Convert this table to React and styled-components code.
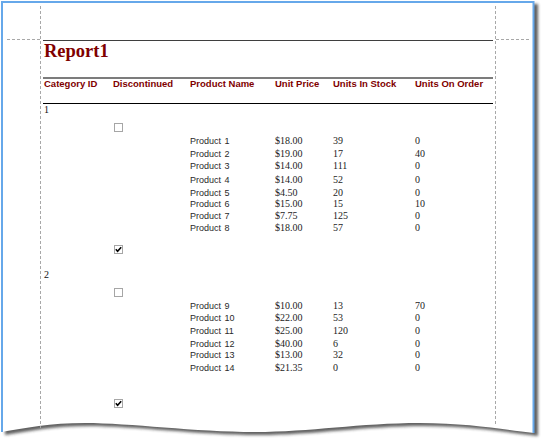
import React from "react";
import styled, { createGlobalStyle } from "styled-components";

const Global = createGlobalStyle`
  html, body { margin: 0; padding: 0; background: #ffffff; }
  #root { width: 542px; height: 444px; }
`;

const Canvas = styled.div`
  position: relative;
  width: 542px;
  height: 444px;
  overflow: hidden;
  background: #ffffff;
`;

const FrameArt = styled.svg`
  position: absolute;
  left: 0;
  top: 0;
  width: 542px;
  height: 444px;
  z-index: 0;
`;

const Report = styled.div`
  position: relative;
  z-index: 1;
  width: 450px;
  margin: 40px 0 0 43px;
  display: flex;
  flex-direction: column;
`;

const TitleBand = styled.div`
  height: 36px;
  border-top: 1px solid #3f3f3f;
  padding-left: 1px;
`;

const Title = styled.h1`
  margin: 0;
  padding-top: 0.5px;
  font-family: "Liberation Serif", "Times New Roman", serif;
  font-weight: bold;
  font-size: 18.5px;
  line-height: 18.5px;
  color: #800000;
`;

const Grid = styled.div`
  display: grid;
  grid-template-columns: 69px 77px 85px 58px 82px 1fr;
  padding-left: 1px;
  align-items: start;
`;

const HeaderBand = styled(Grid)`
  height: 24px;
  border-top: 2px solid #7c7c7c;
  border-bottom: 1px solid #000000;
`;

const HeadCell = styled.div`
  font-family: "Liberation Sans", Arial, sans-serif;
  font-weight: bold;
  font-size: 9.5px;
  line-height: 9px;
  color: #800000;
  white-space: nowrap;
`;

const Group = styled.div`
  display: flex;
  flex-direction: column;
`;

const GroupLabel = styled.div`
  height: 12px;
  padding-left: 1px;
  font-family: "Liberation Serif", "Times New Roman", serif;
  font-size: 10px;
  line-height: 12px;
  color: #111111;
`;

const CheckRow = styled(Grid)`
  height: ${(p) => p.$h}px;
  padding-top: ${(p) => p.$top}px;
  box-sizing: border-box;
`;

const Box = styled.div`
  grid-column: 2;
  width: 9px;
  height: 9px;
  margin-left: 1px;
  box-sizing: border-box;
  border: 1px solid #a6a6a6;
  background: #ffffff;
  display: flex;
  align-items: center;
  justify-content: center;
`;

const DetailRow = styled(Grid)`
  height: ${(p) => p.$h}px;
`;

const NameCell = styled.div`
  grid-column: 3;
  font-family: "Liberation Sans", Arial, sans-serif;
  font-size: 9px;
  line-height: 12px;
  color: #2a2a2a;
  word-spacing: 1px;
  white-space: nowrap;
`;

const NumCell = styled.div`
  font-family: "Liberation Serif", "Times New Roman", serif;
  font-size: 10px;
  line-height: 12px;
  color: #1c1c1c;
  white-space: nowrap;
`;

function CheckBox({ checked }) {
  return (
    <Box>
      {checked && (
        <svg width="7" height="7" viewBox="0 0 7 7">
          <path d="M0.8 3.2 L2.6 5.2 L6.2 1.2" fill="none" stroke="#000" strokeWidth="1.6" />
        </svg>
      )}
    </Box>
  );
}

const headers = [
  "Category ID",
  "Discontinued",
  "Product Name",
  "Unit Price",
  "Units In Stock",
  "Units On Order",
];

const groups = [
  {
    id: "1",
    rows: [
      ["Product 1", "$18.00", "39", "0", 13],
      ["Product 2", "$19.00", "17", "40", 12],
      ["Product 3", "$14.00", "111", "0", 14],
      ["Product 4", "$14.00", "52", "0", 13],
      ["Product 5", "$4.50", "20", "0", 11],
      ["Product 6", "$15.00", "15", "10", 12],
      ["Product 7", "$7.75", "125", "0", 12],
      ["Product 8", "$18.00", "57", "0", 12],
    ],
    footTop: 11,
    footH: 35,
  },
  {
    id: "2",
    rows: [
      ["Product 9", "$10.00", "13", "70", 12],
      ["Product 10", "$22.00", "53", "0", 13],
      ["Product 11", "$25.00", "120", "0", 12.5],
      ["Product 12", "$40.00", "6", "0", 11.5],
      ["Product 13", "$13.00", "32", "0", 12.5],
      ["Product 14", "$21.35", "0", "0", 12],
    ],
    footTop: 25.5,
    footH: 40,
  },
];

const wave =
  "C505,430 470,423 420,423 C360,423 310,432 255,432 C195,432 130,423 85,423 C50,423 25,428 1,432";
const pageShape = `M1,1 H534 V433 ${wave} Z`;

function Frame() {
  return (
    <FrameArt viewBox="0 0 542 444">
      <defs>
        <filter id="sh" x="-5%" y="-5%" width="110%" height="110%">
          <feGaussianBlur stdDeviation="1.8" />
        </filter>
      </defs>
      <path d={pageShape} transform="translate(4,3)" fill="#2a2a2a" opacity="0.75" filter="url(#sh)" />
      <path d={pageShape} fill="#ffffff" />
      <path d="M2,432 V2 H533.5 V433" fill="none" stroke="#66a8ea" strokeWidth="2" />
      <g stroke="#a8a8a8" strokeWidth="1" strokeDasharray="3 2" fill="none">
        <path d="M40.5,6 V428" />
        <path d="M495.5,6 V426" />
        <path d="M7,39.5 H40" />
        <path d="M496,39.5 H529" />
      </g>
    </FrameArt>
  );
}

export default function App() {
  return (
    <Canvas>
      <Global />
      <Frame />
      <Report>
        <TitleBand>
          <Title>Report1</Title>
        </TitleBand>
        <HeaderBand>
          {headers.map((h) => (
            <HeadCell key={h}>{h}</HeadCell>
          ))}
        </HeaderBand>
        {groups.map((g) => (
          <Group key={g.id}>
            <GroupLabel>{g.id}</GroupLabel>
            <CheckRow $h={19} $top={7}>
              <CheckBox checked={false} />
            </CheckRow>
            {g.rows.map(([name, price, stock, order, h]) => (
              <DetailRow key={name} $h={h}>
                <NameCell>{name}</NameCell>
                <NumCell>{price}</NumCell>
                <NumCell>{stock}</NumCell>
                <NumCell>{order}</NumCell>
              </DetailRow>
            ))}
            <CheckRow $h={g.footH} $top={g.footTop}>
              <CheckBox checked />
            </CheckRow>
          </Group>
        ))}
      </Report>
    </Canvas>
  );
}
